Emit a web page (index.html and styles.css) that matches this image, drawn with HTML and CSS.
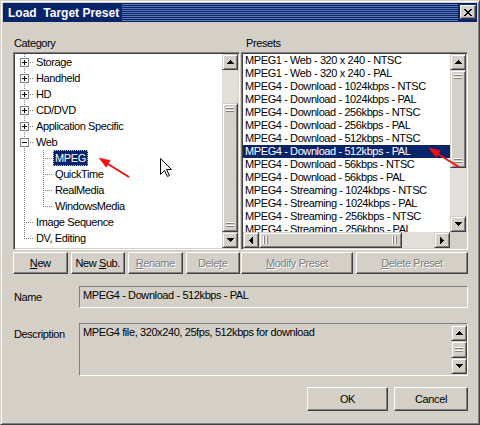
FILE: index.html
```html
<!DOCTYPE html>
<html>
<head>
<meta charset="utf-8">
<link rel="stylesheet" href="styles.css">
</head>
<body>
<div class="window">
  <div class="titlebar">
    <span class="title">Load  Target Preset</span>
    <span class="stripes"></span>
    <span class="close"><svg width="8" height="7" viewBox="0 0 8 7"><path d="M0 0h2v1h1v1h2V1h1V0h2v1h-1v1h-1v1h-1v1h1v1h1v1h1v1H6V6H5V5H3v1H2v1H0V6h1V5h1V4h1V3H2V2H1V1H0z"/></svg></span>
  </div>
  <div class="content">
    <div class="panes">
      <div class="pane">
        <div class="pane-label cat-label">Category</div>
        <div class="sunken tree">
          <div class="tree-rows">
            <div class="row"><span class="c tee"><span class="tbox plus"></span></span><span class="lbl">Storage</span></div>
            <div class="row"><span class="c tee"><span class="tbox plus"></span></span><span class="lbl">Handheld</span></div>
            <div class="row"><span class="c tee"><span class="tbox plus"></span></span><span class="lbl">HD</span></div>
            <div class="row"><span class="c tee"><span class="tbox plus"></span></span><span class="lbl">CD/DVD</span></div>
            <div class="row"><span class="c tee"><span class="tbox plus"></span></span><span class="lbl">Application Specific</span></div>
            <div class="row"><span class="c tee"><span class="tbox minus"></span></span><span class="lbl">Web</span></div>
            <div class="row"><span class="c pipe"></span><span class="c tee"></span><span class="lbl sel">MPEG</span></div>
            <div class="row"><span class="c pipe"></span><span class="c tee"></span><span class="lbl">QuickTime</span></div>
            <div class="row"><span class="c pipe"></span><span class="c tee"></span><span class="lbl">RealMedia</span></div>
            <div class="row"><span class="c pipe"></span><span class="c elbow"></span><span class="lbl">WindowsMedia</span></div>
            <div class="row"><span class="c tee"></span><span class="lbl">Image Sequence</span></div>
            <div class="row"><span class="c elbow"></span><span class="lbl">DV, Editing</span></div>
          </div>
          <div class="vscroll">
            <span class="sbtn"><svg width="7" height="4" viewBox="0 0 7 4"><path d="M3 0h1v1h1v1h1v1h1v1H0V3h1V2h1V1h1z"/></svg></span>
            <span class="track tree-track-top"></span>
            <span class="vthumb"><span class="grip-h"></span><span class="grip-h"></span></span>
            <span class="sbtn"><svg width="7" height="4" viewBox="0 0 7 4"><path d="M0 0h7v1H6v1H5v1H4v1H3V3H2V2H1V1H0z"/></svg></span>
          </div>
        </div>
        <div class="btns">
          <span class="btn"><span><u>N</u>ew</span></span>
          <span class="btn"><span>New <u>S</u>ub.</span></span>
          <span class="btn dis"><span><u>R</u>ename</span></span>
          <span class="btn dis"><span>Dele<u>t</u>e</span></span>
        </div>
      </div>
      <div class="pane">
        <div class="pane-label pre-label">Presets</div>
        <div class="sunken presets">
          <div class="list">
            <div class="item">MPEG1 - Web - 320 x 240 - NTSC</div>
            <div class="item">MPEG1 - Web - 320 x 240 - PAL</div>
            <div class="item">MPEG4 - Download - 1024kbps - NTSC</div>
            <div class="item">MPEG4 - Download - 1024kbps - PAL</div>
            <div class="item">MPEG4 - Download - 256kbps - NTSC</div>
            <div class="item">MPEG4 - Download - 256kbps - PAL</div>
            <div class="item">MPEG4 - Download - 512kbps - NTSC</div>
            <div class="item sel">MPEG4 - Download - 512kbps - PAL</div>
            <div class="item">MPEG4 - Download - 56kbps - NTSC</div>
            <div class="item">MPEG4 - Download - 56kbps - PAL</div>
            <div class="item">MPEG4 - Streaming - 1024kbps - NTSC</div>
            <div class="item">MPEG4 - Streaming - 1024kbps - PAL</div>
            <div class="item">MPEG4 - Streaming - 256kbps - NTSC</div>
            <div class="item">MPEG4 - Streaming - 256kbps - PAL</div>
          </div>
          <div class="vscroll">
            <span class="sbtn"><svg width="7" height="4" viewBox="0 0 7 4"><path d="M3 0h1v1h1v1h1v1h1v1H0V3h1V2h1V1h1z"/></svg></span>
            <span class="vthumb pre-thumb"><span class="grip-h"></span><span class="grip-h"></span></span>
            <span class="track"></span>
            <span class="sbtn"><svg width="7" height="4" viewBox="0 0 7 4"><path d="M0 0h7v1H6v1H5v1H4v1H3V3H2V2H1V1H0z"/></svg></span>
          </div>
          <div class="hscroll">
            <span class="sbtn"><svg width="4" height="7" viewBox="0 0 4 7"><path d="M3 0h1v7H3V6H2V5H1V4H0V3h1V2h1V1h1z"/></svg></span>
            <span class="hthumb"><span class="grip-v"></span><span class="grip-v"></span></span>
            <span class="track"></span>
            <span class="sbtn"><svg width="4" height="7" viewBox="0 0 4 7"><path d="M0 0h1v1h1v1h1v1h1v1H3v1H2v1H1v1H0z"/></svg></span>
          </div>
          <div class="corner"></div>
        </div>
        <div class="btns">
          <span class="btn dis"><span><u>M</u>odify Preset</span></span>
          <span class="btn dis"><span><u>D</u>elete Preset</span></span>
        </div>
      </div>
    </div>

    <div class="frow name-row">
      <span class="flabel">Name</span>
      <div class="field">MPEG4 - Download - 512kbps - PAL</div>
    </div>
    <div class="frow desc-row">
      <span class="flabel">Description</span>
      <div class="field desc">
        <span class="desc-text">MPEG4 file, 320x240, 25fps, 512kbps for download</span>
        <div class="vscroll small">
          <span class="sbtn"><svg width="7" height="4" viewBox="0 0 7 4"><path d="M3 0h1v1h1v1h1v1h1v1H0V3h1V2h1V1h1z"/></svg></span>
          <span class="vthumb full"><span class="grip-h"></span></span>
          <span class="sbtn"><svg width="7" height="4" viewBox="0 0 7 4"><path d="M0 0h7v1H6v1H5v1H4v1H3V3H2V2H1V1H0z"/></svg></span>
        </div>
      </div>
    </div>

    <div class="actions">
      <span class="btn ok"><span>OK</span></span>
      <span class="btn cancel"><span>Cancel</span></span>
    </div>
  </div>

  <svg class="overlay" width="480" height="425" viewBox="0 0 480 425">
    <g fill="#f01010" stroke="#f01010">
      <line x1="107" y1="163" x2="128" y2="176" stroke-width="2"/>
      <polygon points="98,157 105.2,166.3 109.4,159.5" stroke-width="0.5"/>
      <line x1="437" y1="153" x2="458" y2="166" stroke-width="2"/>
      <polygon points="428,147 435.2,156.3 439.4,149.5" stroke-width="0.5"/>
    </g>
    <path transform="translate(159,157)" d="M0.5 0.5V16.5L4.5 12.5L7.5 18.5L9.5 17.5L6.5 11.5H11.5Z" fill="#fff" stroke="#000" stroke-width="1"/>
  </svg>
</div>
</body>
</html>
```

FILE: styles.css
```css
body {
  margin: 0;
  background: #d4d0c8;
  font-family: "Liberation Sans", Arial, sans-serif;
  font-size: 11px;
  letter-spacing: -0.4px;
  color: #000;
}

.window {
  position: relative;
  width: 480px;
  height: 425px;
  box-sizing: border-box;
  background: #d4d0c8;
  border: 1px solid;
  border-color: #d4d0c8 #404040 #404040 #d4d0c8;
  padding: 2px;
  box-shadow: inset 1px 1px #fff, inset -1px -1px #808080;
}

.titlebar {
  display: flex;
  height: 19px;
  background: #0a246a;
  color: #fff;
}

.title {
  font-weight: bold;
  font-size: 12px;
  letter-spacing: 0;
  line-height: 17px;
  padding: 2px 0 0 5px;
  white-space: pre;
}

.stripes {
  flex: 1;
  margin: 0 2px 0 3px;
  background: repeating-linear-gradient(to bottom, #0a246a 0 1px, #5b76b4 1px 2px);
}

.close {
  width: 16px;
  height: 14px;
  margin: 2px 1px 0 0;
  box-sizing: border-box;
  background: #d4d0c8;
  border: 1px solid;
  border-color: #fff #404040 #404040 #fff;
  box-shadow: inset -1px -1px #808080;
  display: flex;
  align-items: center;
  justify-content: center;
}

.content {
  padding: 15px 9px 0 10px;
}

.panes {
  display: grid;
  grid-template-columns: 227px 227px;
  column-gap: 1px;
}

.pane-label {
  height: 13px;
  line-height: 13px;
  margin-bottom: 2px;
}
.cat-label { padding-left: 1px; }
.pre-label { padding-left: 5px; }

.sunken {
  height: 198px;
  box-sizing: border-box;
  border: 1px solid;
  border-color: #808080 #fff #fff #808080;
  box-shadow: inset 1px 1px #404040, inset -1px -1px #d4d0c8;
  padding: 1px;
  background: #fff;
}

.tree {
  display: flex;
}

.tree-rows {
  flex: 1;
  overflow: hidden;
}

.row {
  display: flex;
  height: 16px;
  white-space: nowrap;
}

.c {
  flex: none;
  width: 19px;
  height: 16px;
  display: flex;
  align-items: flex-start;
  background-repeat: no-repeat;
}

.c.pipe {
  background-image: repeating-linear-gradient(to bottom, #808080 0 1px, transparent 1px 2px);
  background-size: 1px 16px;
  background-position: 9px 0;
}

.c.tee {
  background-image:
    repeating-linear-gradient(to bottom, #808080 0 1px, transparent 1px 2px),
    repeating-linear-gradient(to right, #808080 0 1px, transparent 1px 2px);
  background-size: 1px 16px, 9px 1px;
  background-position: 9px 0, 11px 8px;
}

.c.elbow {
  background-image:
    repeating-linear-gradient(to bottom, #808080 0 1px, transparent 1px 2px),
    repeating-linear-gradient(to right, #808080 0 1px, transparent 1px 2px);
  background-size: 1px 9px, 9px 1px;
  background-position: 9px 0, 11px 8px;
}

.tbox {
  width: 9px;
  height: 9px;
  box-sizing: border-box;
  margin: 4px 0 0 5px;
  border: 1px solid #808080;
  background-color: #fff;
  background-repeat: no-repeat;
}

.tbox.plus {
  background-image: linear-gradient(#000, #000), linear-gradient(#000, #000);
  background-size: 5px 1px, 1px 5px;
  background-position: 1px 3px, 3px 1px;
}

.tbox.minus {
  background-image: linear-gradient(#000, #000);
  background-size: 5px 1px;
  background-position: 1px 3px;
}

.lbl {
  line-height: 14px;
  height: 14px;
  border: 1px solid transparent;
  padding: 0 1px;
}

.lbl.sel {
  background: #0a246a;
  color: #fff;
  border: 1px dotted #d8c878;
}

.vscroll {
  flex: none;
  width: 16px;
  display: flex;
  flex-direction: column;
}

.sbtn {
  flex: none;
  width: 16px;
  height: 16px;
  box-sizing: border-box;
  background: #d4d0c8;
  border: 1px solid;
  border-color: #d4d0c8 #404040 #404040 #d4d0c8;
  box-shadow: inset 1px 1px #fff, inset -1px -1px #808080;
  display: flex;
  align-items: center;
  justify-content: center;
}

.sbtn svg { display: block; }

.track {
  flex: 1;
  background: #e2dfda;
}

.tree-track-top {
  flex: none;
  height: 33px;
}

.vthumb {
  flex: 1;
  box-sizing: border-box;
  background: #d4d0c8;
  border: 1px solid;
  border-color: #d4d0c8 #404040 #404040 #d4d0c8;
  box-shadow: inset 1px 1px #fff, inset -1px -1px #808080;
  display: flex;
  flex-direction: column;
  justify-content: space-between;
  padding: 3px 3px;
}

.pre-thumb {
  flex: none;
  height: 98px;
}

.vthumb.full {
  justify-content: center;
}

.grip-h {
  height: 6px;
  background: repeating-linear-gradient(to bottom, #fff 0 1px, #808080 1px 2px, transparent 2px 3px);
}

.presets {
  display: grid;
  grid-template-columns: 1fr 16px;
  grid-template-rows: 178px 16px;
}

.list {
  overflow: hidden;
}

.item {
  height: 13px;
  line-height: 13px;
  padding-left: 2px;
  white-space: nowrap;
}

.item.sel {
  background: #0a246a;
  color: #fff;
}

.presets .vscroll {
  height: 178px;
}

.hscroll {
  display: flex;
  height: 16px;
}

.hthumb {
  flex: none;
  width: 143px;
  box-sizing: border-box;
  background: #d4d0c8;
  border: 1px solid;
  border-color: #d4d0c8 #404040 #404040 #d4d0c8;
  box-shadow: inset 1px 1px #fff, inset -1px -1px #808080;
  display: flex;
  justify-content: space-between;
  padding: 3px 3px;
}

.grip-v {
  width: 6px;
  background: repeating-linear-gradient(to right, #fff 0 1px, #808080 1px 2px, transparent 2px 3px);
}

.corner {
  background: #d4d0c8;
}

.btns {
  display: flex;
  gap: 3px;
  margin-top: 2px;
  height: 22px;
}

.btn {
  flex: 1;
  box-sizing: border-box;
  background: #d4d0c8;
  border: 1px solid;
  border-color: #fff #404040 #404040 #fff;
  box-shadow: inset -1px -1px #808080;
  display: flex;
  align-items: center;
  justify-content: center;
  line-height: 13px;
  white-space: nowrap;
}

.btn.dis {
  color: #808080;
  text-shadow: 1px 1px 0 #fff;
}

.frow {
  display: grid;
  grid-template-columns: 66px 1fr;
}

.name-row {
  margin-top: 12px;
}

.desc-row {
  margin-top: 15px;
}

.flabel {
  padding: 5px 0 0 1px;
  line-height: 13px;
}

.field {
  box-sizing: border-box;
  height: 22px;
  border: 1px solid;
  border-color: #808080 #fff #fff #808080;
  padding: 2px 0 0 3px;
  line-height: 13px;
  white-space: nowrap;
}

.field.desc {
  height: 53px;
  display: flex;
  padding: 1px 0 1px 3px;
}

.desc-text {
  flex: 1;
  padding-top: 1px;
}

.vscroll.small {
  height: 49px;
}

.actions {
  display: flex;
  justify-content: flex-end;
  gap: 6px;
  margin-top: 11px;
}

.actions .btn {
  flex: none;
  height: 24px;
}

.btn.ok { width: 81px; }
.btn.cancel { width: 74px; }

.overlay {
  position: absolute;
  left: 0;
  top: 0;
  pointer-events: none;
}
```
